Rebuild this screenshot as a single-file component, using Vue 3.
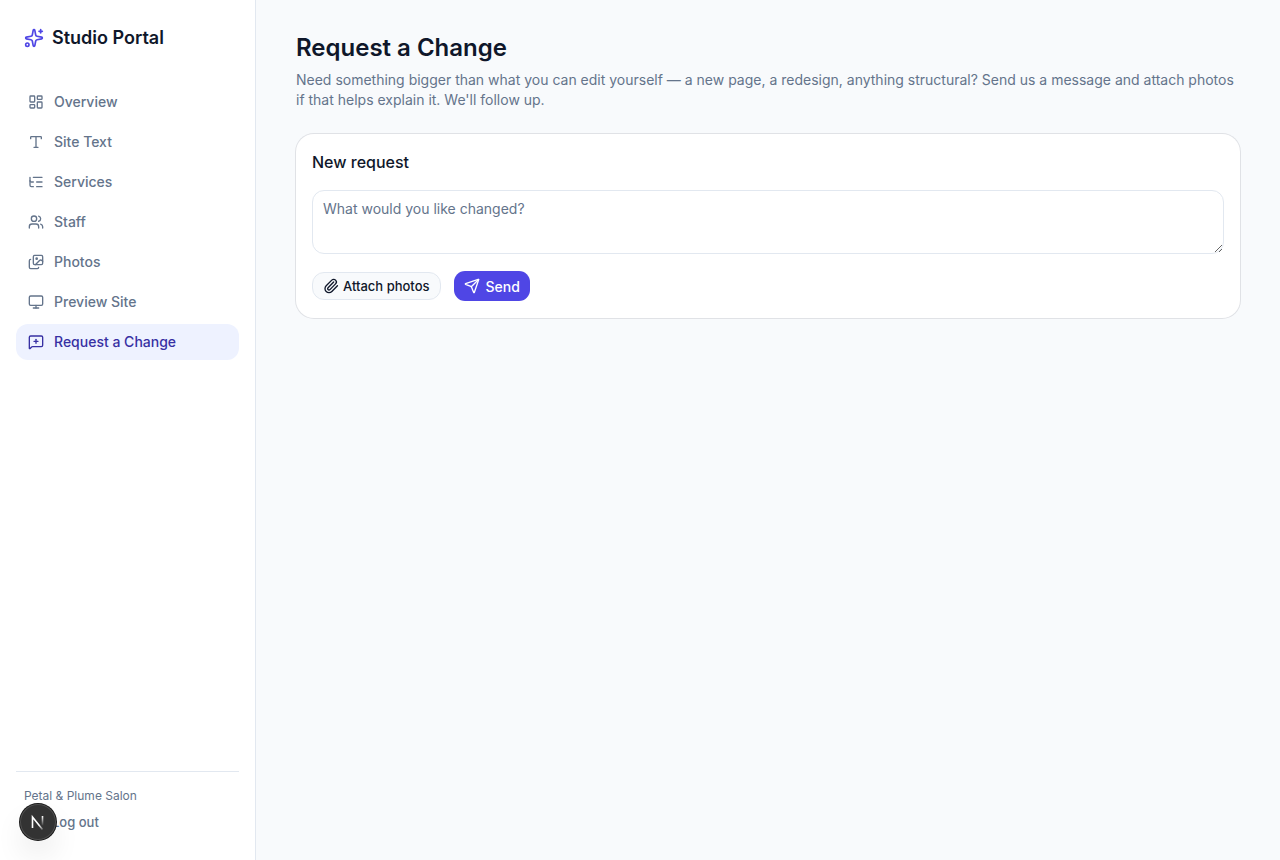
<script setup>
import { ref } from 'vue'

const message = ref('')
const fileInput = ref(null)
const active = ref('Request a Change')

const links = [
    {
        label: 'Overview',
        icon: '<rect width="7" height="9" x="3" y="3" rx="1"/><rect width="7" height="5" x="14" y="3" rx="1"/><rect width="7" height="9" x="14" y="12" rx="1"/><rect width="7" height="5" x="3" y="16" rx="1"/>'
    },
    {
        label: 'Site Text',
        icon: '<path d="M12 4v16"/><path d="M4 7V5a1 1 0 0 1 1-1h14a1 1 0 0 1 1 1v2"/><path d="M9 20h6"/>'
    },
    {
        label: 'Services',
        icon: '<path d="M8 5h13"/><path d="M13 12h8"/><path d="M13 19h8"/><path d="M3 10a2 2 0 0 0 2 2h3"/><path d="M3 5v12a2 2 0 0 0 2 2h3"/>'
    },
    {
        label: 'Staff',
        icon: '<path d="M16 21v-2a4 4 0 0 0-4-4H6a4 4 0 0 0-4 4v2"/><path d="M16 3.128a4 4 0 0 1 0 7.744"/><path d="M22 21v-2a4 4 0 0 0-3-3.87"/><circle cx="9" cy="7" r="4"/>'
    },
    {
        label: 'Photos',
        icon: '<path d="m22 11-1.296-1.296a2.4 2.4 0 0 0-3.408 0L11 16"/><path d="M4 8a2 2 0 0 0-2 2v10a2 2 0 0 0 2 2h10a2 2 0 0 0 2-2"/><circle cx="13" cy="7" r="1" fill="currentColor"/><rect x="8" y="2" width="14" height="14" rx="2"/>'
    },
    {
        label: 'Preview Site',
        icon: '<rect width="20" height="14" x="2" y="3" rx="2"/><path d="M8 21h8"/><path d="M12 17v4"/>'
    },
    {
        label: 'Request a Change',
        icon: '<path d="M22 17a2 2 0 0 1-2 2H6.828a2 2 0 0 0-1.414.586l-2.202 2.202A.71.71 0 0 1 2 21.286V5a2 2 0 0 1 2-2h16a2 2 0 0 1 2 2z"/><path d="M12 8v6"/><path d="M9 11h6"/>'
    }
]

const send = () => {
    if (message.value === '') return
    console.log('send', message.value)
    message.value = ''
}
</script>

<template>
    <div class="layout">
        <aside class="sidebar">
            <div class="brand">
                <svg class="icon icon--brand" viewBox="0 0 24 24">
                    <path d="M11.017 2.814a1 1 0 0 1 1.966 0l1.051 5.558a2 2 0 0 0 1.594 1.594l5.558 1.051a1 1 0 0 1 0 1.966l-5.558 1.051a2 2 0 0 0-1.594 1.594l-1.051 5.558a1 1 0 0 1-1.966 0l-1.051-5.558a2 2 0 0 0-1.594-1.594l-5.558-1.051a1 1 0 0 1 0-1.966l5.558-1.051a2 2 0 0 0 1.594-1.594z" />
                    <path d="M20 2v4" />
                    <path d="M22 4h-4" />
                    <circle cx="4" cy="20" r="2" />
                </svg>
                <span>Studio Portal</span>
            </div>
            <nav class="nav">
                <a
                    v-for="link in links"
                    :key="link.label"
                    href="#"
                    class="nav__link"
                    :class="{ 'nav__link--active': link.label === active }"
                    @click.prevent="active = link.label"
                >
                    <svg class="icon" viewBox="0 0 24 24" v-html="link.icon"></svg>
                    {{ link.label }}
                </a>
            </nav>
            <div class="account">
                <p class="account__name">Petal &amp; Plume Salon</p>
                <button class="account__logout" type="button">
                    <svg class="icon" viewBox="0 0 24 24">
                        <path d="m16 17 5-5-5-5" />
                        <path d="M21 12H9" />
                        <path d="M9 21H5a2 2 0 0 1-2-2V5a2 2 0 0 1 2-2h4" />
                    </svg>
                    Log out
                </button>
            </div>
        </aside>

        <main class="main">
            <h1>Request a Change</h1>
            <p class="intro">Need something bigger than what you can edit yourself — a new page, a redesign, anything structural? Send us a message and attach photos if that helps explain it. We'll follow up.</p>

            <form class="card" @submit.prevent="send">
                <label class="card__title" for="message">New request</label>
                <textarea id="message" v-model="message" class="card__field" placeholder="What would you like changed?"></textarea>
                <div class="card__actions">
                    <input ref="fileInput" type="file" accept="image/*" multiple hidden aria-label="Attach photos" />
                    <button class="btn btn--outline" type="button" @click="fileInput.click()">
                        <svg class="icon" viewBox="0 0 24 24">
                            <path d="m16 6-8.414 8.586a2 2 0 0 0 2.829 2.829l8.414-8.586a4 4 0 1 0-5.657-5.657l-8.379 8.551a6 6 0 1 0 8.485 8.485l8.379-8.551" />
                        </svg>
                        Attach photos
                    </button>
                    <button class="btn btn--primary" type="submit">
                        <svg class="icon" viewBox="0 0 24 24">
                            <path d="M14.536 21.686a.5.5 0 0 0 .937-.024l6.5-19a.496.496 0 0 0-.635-.635l-19 6.5a.5.5 0 0 0-.024.937l7.93 3.18a2 2 0 0 1 1.112 1.11z" />
                            <path d="m21.854 2.147-10.94 10.939" />
                        </svg>
                        Send
                    </button>
                </div>
            </form>
        </main>

        <button class="devtools" type="button" aria-label="Open dev tools">
            <svg width="40" height="40" viewBox="0 0 40 40" fill="none">
                <defs>
                    <linearGradient id="diagonal" x1="21" y1="23" x2="26" y2="29" gradientUnits="userSpaceOnUse">
                        <stop stop-color="#fff" />
                        <stop offset="1" stop-color="#fff" stop-opacity="0" />
                    </linearGradient>
                    <linearGradient id="stem" x1="24" y1="14" x2="24" y2="24" gradientUnits="userSpaceOnUse">
                        <stop stop-color="#fff" />
                        <stop offset="1" stop-color="#fff" stop-opacity="0" />
                    </linearGradient>
                </defs>
                <path d="M14.500 26V15L24.500 27.500" stroke="url(#diagonal)" stroke-width="1.600" />
                <path d="M24.500 14V23.500" stroke="url(#stem)" stroke-width="1.600" />
            </svg>
        </button>
    </div>
</template>

<style>
    body{
        margin: 0;
        background-color: #f8fafc;
    }
</style>

<style scoped>
    .layout{
        display: flex;
        min-height: 100vh;
        font-family: Inter, "Liberation Sans", sans-serif;
        font-size: 14px;
        line-height: 20px;
        color: #0f172a;
    }

    .layout *{
        box-sizing: border-box;
    }

    .icon{
        width: 16px;
        height: 16px;
        flex-shrink: 0;
        fill: none;
        stroke: currentColor;
        stroke-width: 2;
        stroke-linecap: round;
        stroke-linejoin: round;
    }

    .icon--brand{
        width: 20px;
        height: 20px;
        color: #4f46e5;
    }

    .sidebar{
        width: 256px;
        flex-shrink: 0;
        box-sizing: border-box;
        display: flex;
        flex-direction: column;
        padding: 24px 16px;
        background-color: white;
        border-right: 1px solid #e2e8f0;
    }

    .brand{
        display: flex;
        align-items: center;
        gap: 8px;
        padding: 0 8px;
        margin-bottom: 32px;
        font-size: 18px;
        line-height: 28px;
        font-weight: 600;
    }

    .nav{
        flex: 1;
        display: flex;
        flex-direction: column;
        gap: 4px;
    }

    .nav__link{
        display: flex;
        align-items: center;
        gap: 10px;
        padding: 8px 12px;
        border-radius: 12px;
        color: #64748b;
        font-weight: 500;
        text-decoration: none;
    }

    .nav__link--active{
        background-color: #eef2ff;
        color: #3730a3;
    }

    .account{
        border-top: 1px solid #e2e8f0;
        padding-top: 16px;
        color: #64748b;
    }

    .account__name{
        margin: 0;
        padding: 0 8px;
        font-size: 12px;
        line-height: 16px;
    }

    .account__logout{
        display: flex;
        align-items: center;
        gap: 4px;
        height: 28px;
        margin-top: 4px;
        padding: 0 16px;
        border: none;
        background: none;
        color: inherit;
        font-family: inherit;
        font-size: 13px;
        font-weight: 500;
    }

    .main{
        flex: 1;
        min-width: 0;
        padding: 32px 40px;
    }

    h1{
        margin: 0 0 6px 0;
        font-size: 24px;
        line-height: 32px;
        font-weight: 600;
    }

    .intro{
        margin: 0 0 24px 0;
        color: #64748b;
    }

    .card{
        display: flex;
        flex-direction: column;
        gap: 16px;
        padding: 16px;
        border-radius: 18px;
        background-color: white;
        box-shadow: 0 0 0 1px rgba(15, 23, 42, 0.1);
    }

    .card__title{
        font-size: 16px;
        line-height: 24px;
        font-weight: 500;
    }

    .card__field{
        display: block;
        width: 100%;
        height: 64px;
        padding: 8px 10px;
        border: 1px solid #e2e8f0;
        border-radius: 12px;
        background-color: transparent;
        font: inherit;
        color: inherit;
        resize: vertical;
    }

    .card__field::placeholder{
        color: #64748b;
    }

    .card__actions{
        display: flex;
        align-items: center;
        gap: 12px;
    }

    .btn{
        display: inline-flex;
        align-items: center;
        border: 1px solid transparent;
        border-radius: 12px;
        padding: 0 10px;
        background-clip: padding-box;
        font-family: inherit;
        font-weight: 500;
        white-space: nowrap;
    }

    .btn--outline{
        gap: 4px;
        height: 28px;
        border-color: #e2e8f0;
        background-color: #f8fafc;
        color: #0f172a;
        font-size: 13px;
    }

    .btn--primary{
        gap: 6px;
        height: 32px;
        background-color: #4f46e5;
        color: white;
        font-size: 14px;
    }

    .devtools{
        position: fixed;
        left: 20px;
        bottom: 20px;
        width: 36px;
        height: 36px;
        display: flex;
        align-items: center;
        justify-content: center;
        padding: 0;
        border: none;
        border-radius: 50%;
        background-color: #333;
        box-shadow: 0 0 0 1px #171717, inset 0 0 0 1px rgba(255, 255, 255, 0.14), 0 16px 32px -8px rgba(0, 0, 0, 0.24);
    }

    .devtools svg{
        flex-shrink: 0;
    }
</style>
